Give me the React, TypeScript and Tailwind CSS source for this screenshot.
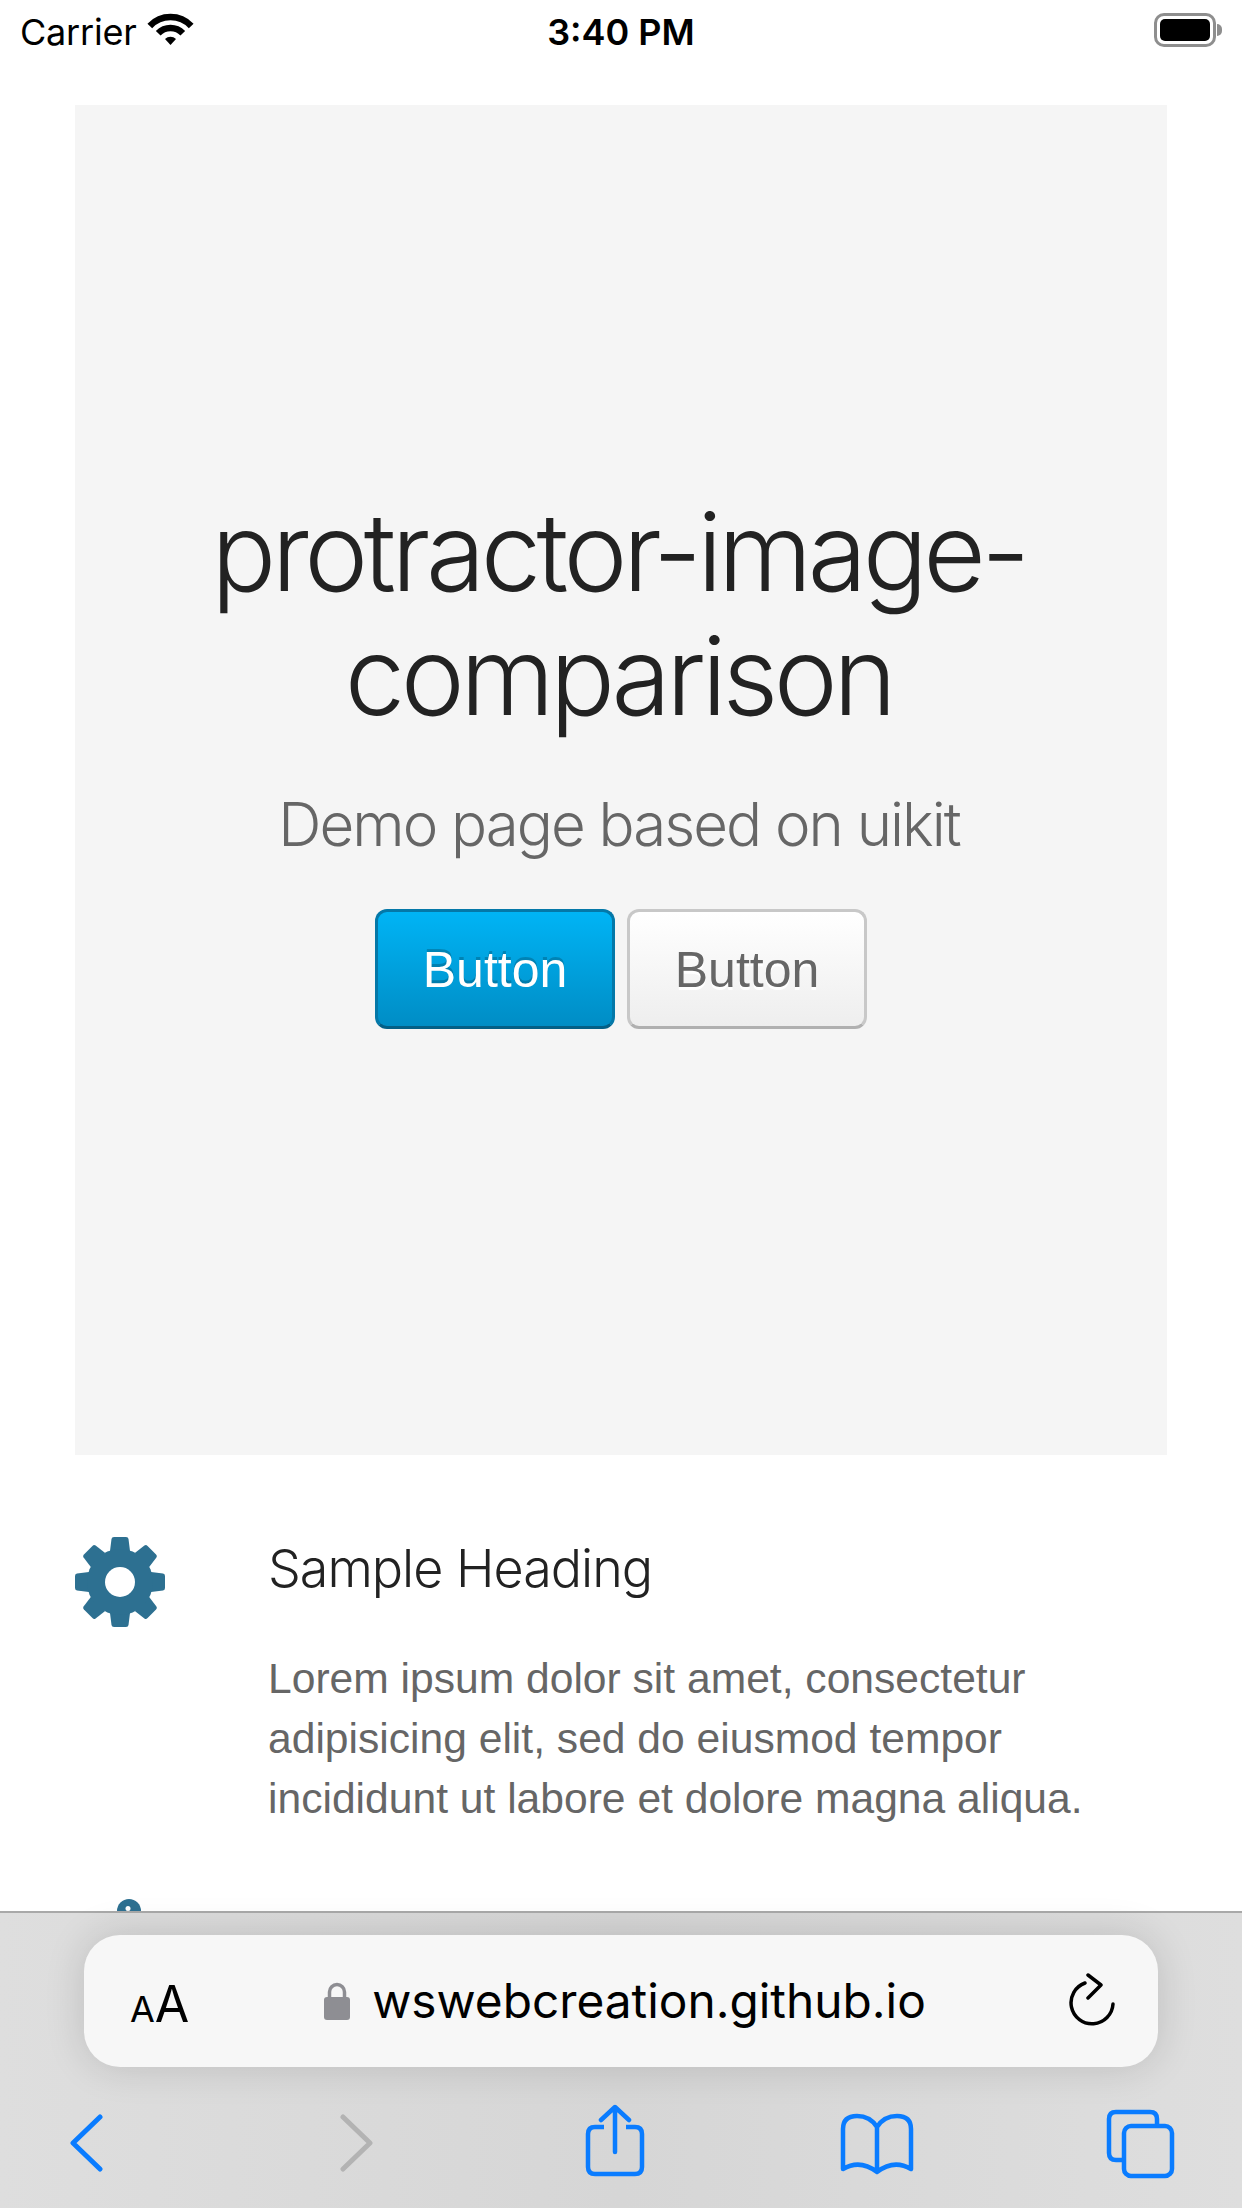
import React from 'react';

const Gear = () => (
  <svg width="90" height="90" viewBox="0 0 90 90" className="shrink-0">
    {[0, 45, 90, 135, 180, 225, 270, 315].map((a) => (
      <path key={a} d="M35 14 L36.5 2 Q36.8 0 39 0 L51 0 Q53.2 0 53.5 2 L55 14 Z" fill="#2d7091" transform={`rotate(${a} 45 45)`} />
    ))}
    <circle cx="45" cy="45" r="33" fill="#2d7091" />
    <circle cx="45" cy="45" r="15" fill="#fff" />
  </svg>
);

const Chevron = ({ left, color }: { left?: boolean; color: string }) => (
  <svg width="36" height="58" viewBox="0 0 36 58" fill="none">
    <path d={left ? 'M31 3 L4 29 L31 55' : 'M5 3 L32 29 L5 55'} stroke={color} strokeWidth="5" strokeLinecap="round" strokeLinejoin="round" />
  </svg>
);

export default function App() {
  return (
    <div className="relative w-[1242px] h-[2208px] overflow-hidden bg-white font-['Liberation_Sans',sans-serif]">
      {/* status bar */}
      <div className="h-[105px] relative flex items-start justify-between pl-[20px] pr-[20px] pt-[13px]">
        <div className="flex items-start gap-[9px]">
          <span className="font-['Inter',sans-serif] text-[36px] leading-[38px] tracking-[-0.2px] text-black">Carrier</span>
          <svg width="49" height="32" viewBox="0 0 49 32" fill="none">
            <path d="M3.8 12.9 A28.5 28.5 0 0 1 45.2 12.9" stroke="#000" strokeWidth="6.5" />
            <path d="M12.2 20.3 A17 17 0 0 1 36.8 20.3" stroke="#000" strokeWidth="6.5" />
            <path d="M19 26 A8 8 0 0 1 30 26 L24.5 32 Z" fill="#000" />
          </svg>
        </div>
        <span className="absolute left-0 right-0 top-[13px] text-center font-['Inter',sans-serif] font-semibold text-[36px] leading-[38px] text-black">3:40 PM</span>
        <div className="flex items-center gap-[1px]">
          <div className="w-[62px] h-[34px] rounded-[10px] border-[3px] border-[#8e8e8e] p-[3px]">
            <div className="w-full h-full rounded-[5px] bg-black" />
          </div>
          <div className="w-[5px] h-[12px] rounded-r-full bg-[#8e8e8e]" />
        </div>
      </div>

      <div className="px-[75px]">
        {/* hero */}
        <div className="h-[1350px] bg-[#f5f5f5] flex flex-col items-center pt-[385px]">
          <h1 className="pr-[5px] text-center font-['Inter',sans-serif] font-light text-[108px] leading-[124px] tracking-[-4.5px] text-[#222]">
            protractor-image-
            <br />
            comparison
          </h1>
          <p className="mt-[44px] pr-[4px] font-['Inter',sans-serif] font-light text-[60px] leading-[84px] tracking-[-2px] text-[#666]">Demo page based on uikit</p>
          <div className="mt-[43px] flex gap-[12px]">
            <button className="w-[240px] h-[120px] rounded-[12px] border-[3px] border-[#0478a8] border-b-[#035f86] bg-gradient-to-b from-[#00b4f5] to-[#008dc5] text-white text-[50px] pt-[2px] [text-shadow:0_-3px_0_rgba(0,0,0,0.2)]">Button</button>
            <button className="w-[240px] h-[120px] rounded-[12px] border-[3px] border-[#c8c8c8] border-b-[#b0b0b0] bg-gradient-to-b from-white to-[#eeeeee] text-[#666] text-[50px] pt-[2px] [text-shadow:0_3px_0_#fff]">Button</button>
          </div>
        </div>

        {/* first feature */}
        <div className="mt-[82px] flex gap-[103px]">
          <Gear />
          <div className="mt-[2px]">
            <h3 className="font-['Inter',sans-serif] font-light text-[52px] leading-[60px] tracking-[-1px] text-[#222]">Sample Heading</h3>
            <p className="mt-[49px] w-[860px] text-[#666] text-[42.6px] leading-[60px]">
              Lorem ipsum dolor sit amet, consectetur adipisicing elit, sed do eiusmod tempor incididunt ut labore et dolore magna aliqua.
            </p>
          </div>
        </div>

        {/* second feature, cut off by the toolbar */}
        <div className="mt-[71px] ml-[42px]">
          <svg width="24" height="24" viewBox="0 0 24 24">
            <circle cx="12" cy="12" r="12" fill="#2d7091" />
            <circle cx="11" cy="9.5" r="2.5" fill="#fff" />
          </svg>
        </div>
      </div>

      {/* safari toolbar */}
      <div className="absolute left-0 right-0 bottom-0 h-[297px] bg-gradient-to-r from-[#dedede] via-[#d6d6d6] to-[#dedede] border-t-[2px] border-[#a9a9a9] px-[84px] pt-[22px]">
        <div className="relative h-[132px] rounded-[36px] bg-[#f7f7f7] shadow-[0_0_40px_rgba(0,0,0,0.14)] flex items-center justify-center pl-[8px]">
          <span className="absolute left-[46px] top-[44px] text-black font-['Inter',sans-serif] leading-none flex items-baseline">
            <span className="text-[36px]">A</span>
            <span className="text-[50px]">A</span>
          </span>
          <svg width="26" height="38" viewBox="0 0 26 38" className="mr-[22px]">
            <path d="M5.5 18 V10 a7.5 7.5 0 0 1 15 0 V18" fill="none" stroke="#8e8e93" strokeWidth="3.5" />
            <rect x="0" y="15" width="26" height="23" rx="3" fill="#8e8e93" />
          </svg>
          <span className="font-['Inter',sans-serif] text-[47.8px] leading-[60px] text-black">wswebcreation.github.io</span>
          <svg width="46" height="54" viewBox="0 0 46 54" fill="none" className="absolute right-[43px] top-[38px]">
            <path d="M16 10 A21 21 0 1 0 44 31" stroke="#000" strokeWidth="3.5" strokeLinecap="round" />
            <path d="M19 2 L32 12 L19 25" stroke="#000" strokeWidth="3.5" strokeLinecap="round" strokeLinejoin="round" />
          </svg>
        </div>

        <div className="absolute left-[69px] top-[201px]"><Chevron left color="#0a7cff" /></div>
        <div className="absolute left-[338px] top-[201px]"><Chevron color="#b3b3b3" /></div>

        <svg width="60" height="74" viewBox="0 0 60 74" fill="none" className="absolute left-[585px] top-[191px]">
          <path d="M19 23 H10 Q3 23 3 30 V63 Q3 70 10 70 H50 Q57 70 57 63 V30 Q57 23 50 23 H41" stroke="#0a7cff" strokeWidth="4.5" />
          <path d="M30 48 V4 M16 16 L30 3 L44 16" stroke="#0a7cff" strokeWidth="4.5" strokeLinecap="round" strokeLinejoin="round" />
        </svg>

        <svg width="74" height="62" viewBox="0 0 74 62" fill="none" className="absolute left-[840px] top-[200px]">
          <path d="M37 14 Q30 3 17 3 Q3 3 3 16 V56 Q20 46 37 59 Q54 46 71 56 V16 Q71 3 57 3 Q44 3 37 14 Z M37 14 V59" stroke="#0a7cff" strokeWidth="4.5" strokeLinejoin="round" />
        </svg>

        <svg width="70" height="70" viewBox="0 0 70 70" fill="none" className="absolute left-[1105px] top-[196px]">
          <path d="M52 15 V10 Q52 3 45 3 H11 Q4 3 4 10 V44 Q4 51 11 51 H17" stroke="#0a7cff" strokeWidth="4.5" />
          <rect x="19" y="17" width="48" height="50" rx="7" stroke="#0a7cff" strokeWidth="4.5" />
        </svg>
      </div>
    </div>
  );
}
